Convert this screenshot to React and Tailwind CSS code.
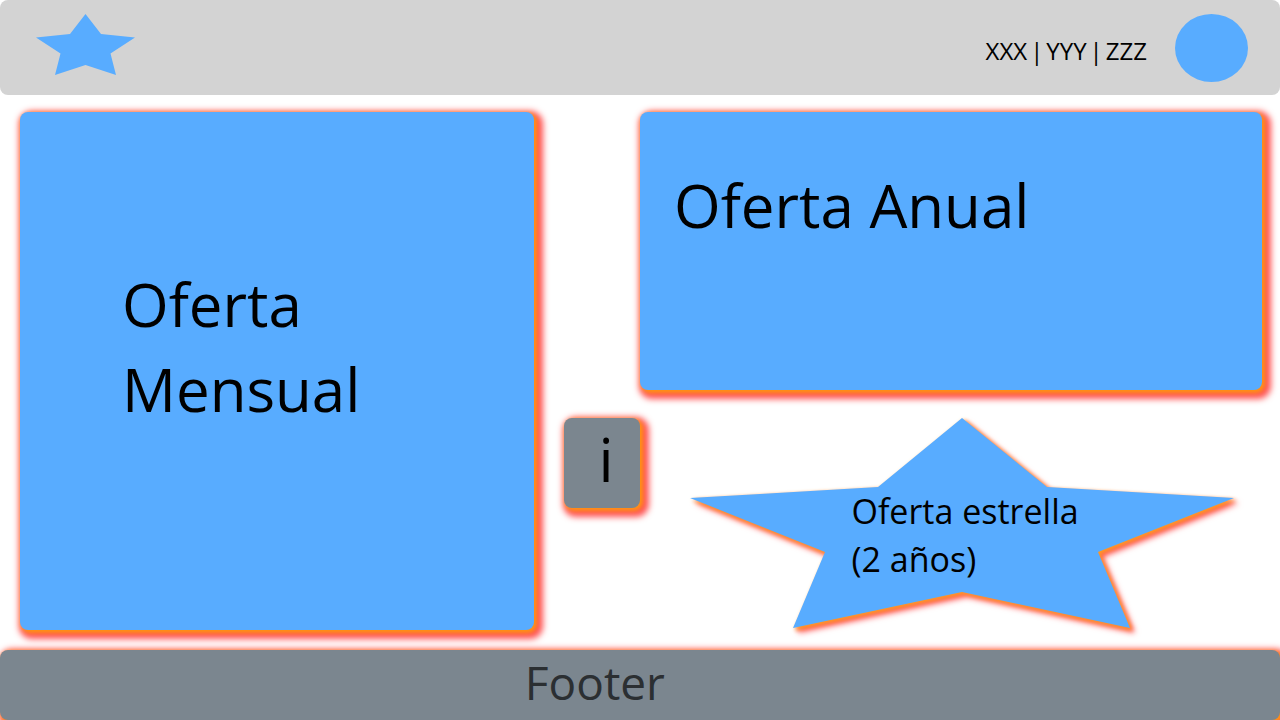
const cardShadow =
  "shadow-[2px_2px_4px_1px_rgba(255,165,0,0.8),4px_4px_6px_5px_rgba(255,0,0,0.68)]";

function Header() {
  return (
    <header className="flex h-[95px] items-start justify-between rounded-lg bg-[#d3d3d3] pt-3.5 pr-8 pl-9">
      <a href="#inicio" aria-label="Inicio">
        <svg className="block h-[61px] w-[99px] fill-[#58acff]" viewBox="0 0 99 61" aria-hidden="true">
          <polygon points="49.5,0 65,20 99,23.5 74.5,39.5 80,61 49.5,51 19,61 24.5,39.5 0,23.5 34,20" />
        </svg>
      </a>
      <div className="flex items-start gap-7">
        <nav className="flex gap-[3px] pt-5 text-2xl leading-[34px]">
          <a href="#xxx">XXX</a>
          <span>|</span>
          <a href="#yyy">YYY</a>
          <span>|</span>
          <a href="#zzz">ZZZ</a>
        </nav>
        <button type="button" aria-label="Perfil" className="h-[68px] w-[73px] rounded-[50%] bg-[#58acff]" />
      </div>
    </header>
  );
}

function StarOffer() {
  return (
    <section className="relative col-start-4 row-start-2 pr-7 pl-[50px]">
      <svg
        className="block h-[210px] w-full overflow-visible fill-[#58acff] [filter:drop-shadow(2px_2px_2px_#ffa01e)_drop-shadow(3px_3px_2px_rgba(255,0,0,0.68))]"
        viewBox="0 0 544 210"
        preserveAspectRatio="none"
        aria-hidden="true"
      >
        <polygon points="272,0 357,69 544,80 408,134 440,210 272,174 103,210 135,134 0,80 188,69" />
      </svg>
      <h2 className="absolute top-[69px] left-[34%] text-[34px] leading-12">
        Oferta estrella
        <br />
        (2 años)
      </h2>
    </section>
  );
}

export default function App() {
  return (
    <div className="bg-white font-['Open_Sans','Noto_Sans',sans-serif] text-black">
      <Header />
      <main className="grid grid-cols-[514fr_30fr_76fr_622fr] grid-rows-[278px_212px] gap-y-7 pt-[17px] pr-[18px] pb-5 pl-5">
        <section className={`row-span-2 rounded-lg bg-[#58acff] pt-[150px] pl-[102px] ${cardShadow}`}>
          <h2 className="text-[60px] leading-[85px]">
            Oferta
            <br />
            Mensual
          </h2>
        </section>
        <section className={`col-start-4 row-start-1 rounded-lg bg-[#58acff] pt-[51px] pl-[34px] ${cardShadow}`}>
          <h2 className="text-[60px] leading-[85px]">Oferta Anual</h2>
        </section>
        <button
          type="button"
          className={`col-start-3 row-start-2 h-[90px] rounded-lg bg-[#7b868f] pb-2 pl-2 text-[60px] leading-[82px] ${cardShadow}`}
        >
          i
        </button>
        <StarOffer />
      </main>
      <footer className={`h-[70px] rounded-lg bg-[#7b868f] pl-[41%] text-[#2b2f32] ${cardShadow}`}>
        <p className="text-[46px] leading-[64px]">Footer</p>
      </footer>
    </div>
  );
}
